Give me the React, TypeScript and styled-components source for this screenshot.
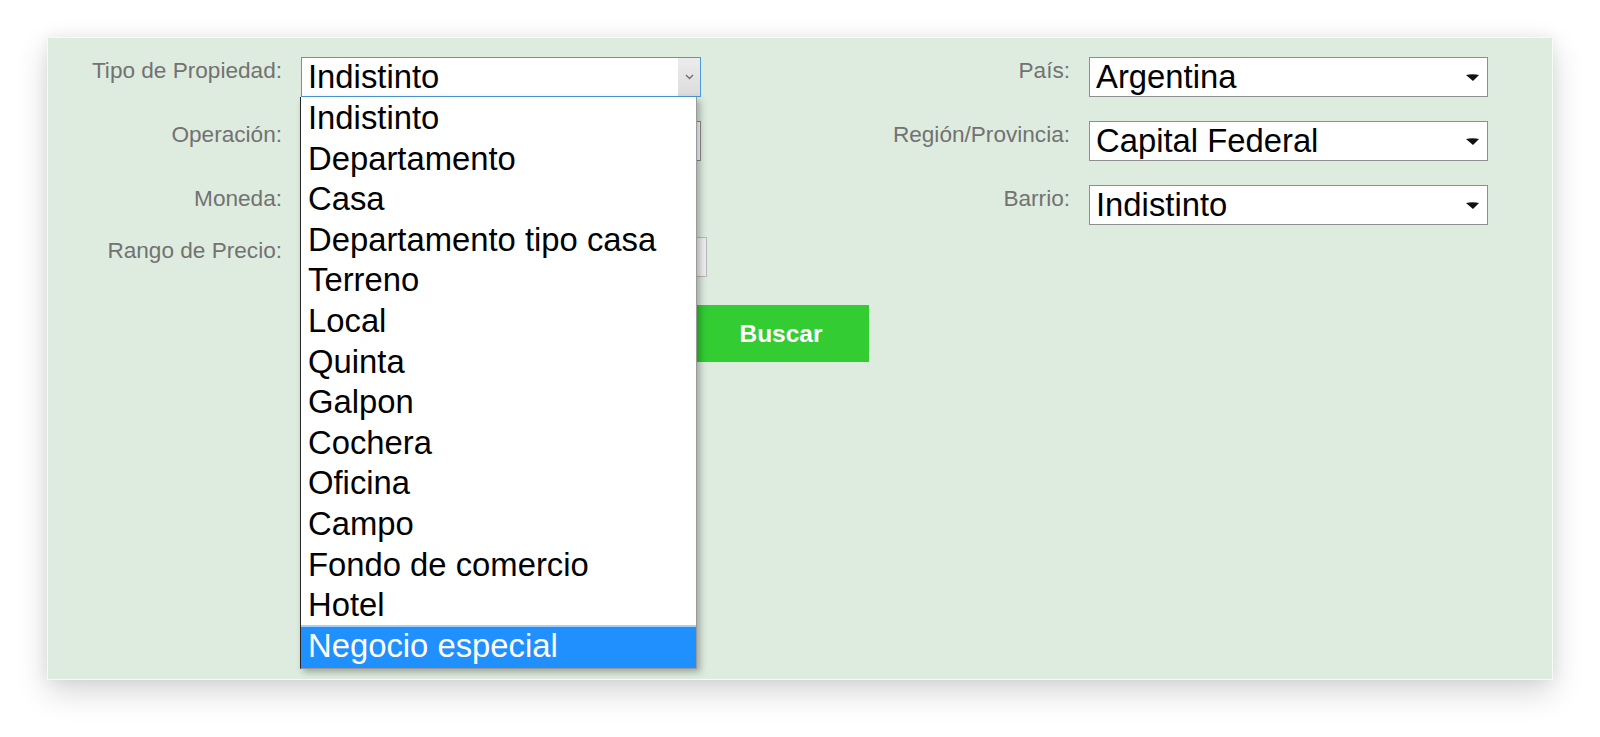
import React from 'react'
import styled, { createGlobalStyle } from 'styled-components'

const GlobalStyle = createGlobalStyle`
  html, body {
    margin: 0;
    padding: 0;
    background: #ffffff;
    font-family: 'Liberation Sans', Arial, sans-serif;
  }
`

const Page = styled.div`
  width: 1600px;
  height: 737px;
  padding: 37px 0 0 47px;
  box-sizing: border-box;
`

const Panel = styled.div`
  width: 1506px;
  height: 643px;
  box-sizing: border-box;
  display: flex;
  padding-top: 19px;
  background: #deecdf;
  border: 1px solid #f6fbf6;
  box-shadow: 0 12px 30px rgba(0, 0, 0, 0.16), 0 0 14px rgba(0, 0, 0, 0.06);
`

const LeftForm = styled.div`
  width: 821px;
  display: flex;
  flex-direction: column;
`

const RightForm = styled.div`
  margin-left: auto;
  padding-right: 64px;
  display: flex;
  flex-direction: column;
`

const Row = styled.div<{ $gap: number }>`
  display: flex;
  align-items: flex-start;
  gap: 19px;
  margin-bottom: ${(p) => p.$gap}px;
`

const Label = styled.div<{ $width: number }>`
  width: ${(p) => p.$width}px;
  text-align: right;
  font-size: 22.6px;
  line-height: 25px;
  color: #727272;
  padding-top: 1px;
  white-space: nowrap;
`

const SelectBox = styled.div<{ $width: number; $focused?: boolean }>`
  position: relative;
  width: ${(p) => p.$width}px;
  height: 40px;
  box-sizing: border-box;
  display: flex;
  align-items: center;
  background: #ffffff;
  border: 1px solid ${(p) => (p.$focused ? '#4b9ad9' : '#8e8e8e')};
`

const SelectText = styled.span`
  flex: 1;
  padding-left: 6px;
  font-size: 32.8px;
  line-height: 38px;
  color: #000000;
  white-space: nowrap;
`

const ChevronBox = styled.div`
  width: 22px;
  height: 100%;
  display: flex;
  align-items: center;
  justify-content: center;
  background: linear-gradient(#ececec, #dcdcdc);
`

const ClassicArrow = styled.div`
  width: 13px;
  margin-right: 8px;
  display: flex;
  align-items: center;
`

const PriceInputs = styled.div`
  display: flex;
  gap: 10px;
`

const PriceInput = styled.div<{ $width: number }>`
  width: ${(p) => p.$width}px;
  height: 40px;
  box-sizing: border-box;
  background: linear-gradient(90deg, #ffffff 80%, #efefef);
  border: 1px solid #b9b9b9;
`

const DropdownList = styled.div`
  position: absolute;
  top: 39px;
  left: -2px;
  width: 397px;
  box-sizing: border-box;
  z-index: 10;
  background: #ffffff;
  border-left: 1px solid #262626;
  border-right: 1px solid #9a9a9a;
  border-bottom: 1px solid #9a9a9a;
  box-shadow: 3px 3px 7px rgba(0, 0, 0, 0.3);
`

const Option = styled.div<{ $selected?: boolean }>`
  height: ${(p) => (p.$selected ? '43.2px' : '40.6px')};
  box-sizing: border-box;
  padding: ${(p) => (p.$selected ? '0 7px' : '1px 7px 0')};
  font-size: 32.8px;
  line-height: ${(p) => (p.$selected ? '38px' : '40px')};
  white-space: nowrap;
  color: ${(p) => (p.$selected ? '#ffffff' : '#000000')};
  background: ${(p) => (p.$selected ? '#1f90fe' : '#ffffff')};
  border-top: ${(p) => (p.$selected ? '2px solid #a6cff7' : 'none')};
`

const SearchRow = styled.div`
  padding-left: 645px;
`

const SearchButton = styled.button`
  width: 176px;
  height: 57px;
  border: none;
  background: #33cc33;
  color: #ffffff;
  font-family: 'Liberation Sans', Arial, sans-serif;
  font-weight: bold;
  font-size: 24.5px;
  padding: 0;
  cursor: pointer;
`

const TIPOS = [
  'Indistinto',
  'Departamento',
  'Casa',
  'Departamento tipo casa',
  'Terreno',
  'Local',
  'Quinta',
  'Galpon',
  'Cochera',
  'Oficina',
  'Campo',
  'Fondo de comercio',
  'Hotel',
  'Negocio especial',
]

const Chevron = () => (
  <svg width="9" height="6" viewBox="0 0 9 6">
    <path d="M1 1 L4.5 4.5 L8 1" fill="none" stroke="#6e6e6e" strokeWidth="1.4" />
  </svg>
)

const BlackArrow = () => (
  <svg width="13" height="7" viewBox="0 0 13 7">
    <path d="M0 1 Q6.5 -0.5 13 1 L7 7 Z" fill="#111111" />
  </svg>
)

const RIGHT_FIELDS = [
  { label: 'País:', value: 'Argentina' },
  { label: 'Región/Provincia:', value: 'Capital Federal' },
  { label: 'Barrio:', value: 'Indistinto' },
]

const App: React.FC = () => {
  return (
    <Page>
      <GlobalStyle />
      <Panel>
        <LeftForm>
          <Row $gap={24}>
            <Label $width={234}>Tipo de Propiedad:</Label>
            <SelectBox $width={400} $focused>
              <SelectText>Indistinto</SelectText>
              <ChevronBox>
                <Chevron />
              </ChevronBox>
              <DropdownList>
                {TIPOS.map((tipo) => (
                  <Option key={tipo} $selected={tipo === 'Negocio especial'}>
                    {tipo}
                  </Option>
                ))}
              </DropdownList>
            </SelectBox>
          </Row>
          <Row $gap={24}>
            <Label $width={234}>Operación:</Label>
            <SelectBox $width={400}>
              <SelectText>Venta</SelectText>
            </SelectBox>
          </Row>
          <Row $gap={12}>
            <Label $width={234}>Moneda:</Label>
            <SelectBox $width={300}>
              <SelectText>Pesos</SelectText>
            </SelectBox>
          </Row>
          <Row $gap={28}>
            <Label $width={234}>Rango de Precio:</Label>
            <PriceInputs>
              <PriceInput $width={196} />
              <PriceInput $width={200} />
            </PriceInputs>
          </Row>
          <SearchRow>
            <SearchButton>Buscar</SearchButton>
          </SearchRow>
        </LeftForm>

        <RightForm>
          {RIGHT_FIELDS.map(({ label, value }) => (
            <Row key={label} $gap={24}>
              <Label $width={200}>{label}</Label>
              <SelectBox $width={399}>
                <SelectText>{value}</SelectText>
                <ClassicArrow>
                  <BlackArrow />
                </ClassicArrow>
              </SelectBox>
            </Row>
          ))}
        </RightForm>
      </Panel>
    </Page>
  )
}

export default App
